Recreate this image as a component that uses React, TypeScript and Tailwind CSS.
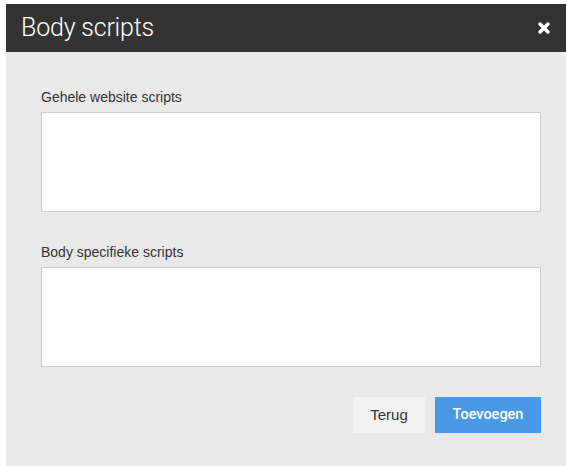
import React from 'react';

const CloseIcon: React.FC = () => (
  <svg width="12" height="12" viewBox="0 0 12 12" aria-hidden="true">
    <path
      d="M2 2 L10 10 M10 2 L2 10"
      stroke="#fff"
      strokeWidth="3.4"
      strokeLinecap="round"
    />
  </svg>
);

const Field: React.FC<{ label: string }> = ({ label }) => (
  <div className="flex flex-col">
    <label className="mb-[5px] text-[14px] leading-[20px] text-[#333]">{label}</label>
    <textarea className="h-[100px] w-full resize-none border border-[#cfcfcf] bg-white outline-none" />
  </div>
);

export default function App() {
  return (
    <div className="min-h-[473px] bg-white pt-[4px] pl-[6px]" style={{ fontFamily: '"Liberation Sans", Arial, sans-serif' }}>
      <div className="w-[560px] bg-[#e9e9e9]">
        <div className="flex h-[48px] items-center justify-between bg-[#333333] pl-[15px] pr-[16px]">
          <h1 className="text-[25px] text-white tracking-[-0.2px]" style={{ fontFamily: 'Roboto, "Liberation Sans", sans-serif', fontWeight: 300 }}>
            Body scripts
          </h1>
          <button className="flex items-center justify-center">
            <CloseIcon />
          </button>
        </div>
        <div className="pt-[35px] pr-[25px] pb-[33px] pl-[35px]">
          <div className="flex flex-col gap-[30px]">
            <Field label="Gehele website scripts" />
            <Field label="Body specifieke scripts" />
          </div>
          <div className="mt-[30px] flex justify-end gap-[10px]">
            <button className="h-[36px] w-[72px] bg-[#f2f2f2] text-[15px] text-[#333]">Terug</button>
            <button
              className="h-[36px] w-[106px] bg-[#4a98e8] text-[14.5px] font-medium text-white"
              style={{ fontFamily: 'Roboto, "Liberation Sans", sans-serif' }}
            >
              Toevoegen
            </button>
          </div>
        </div>
      </div>
    </div>
  );
}
